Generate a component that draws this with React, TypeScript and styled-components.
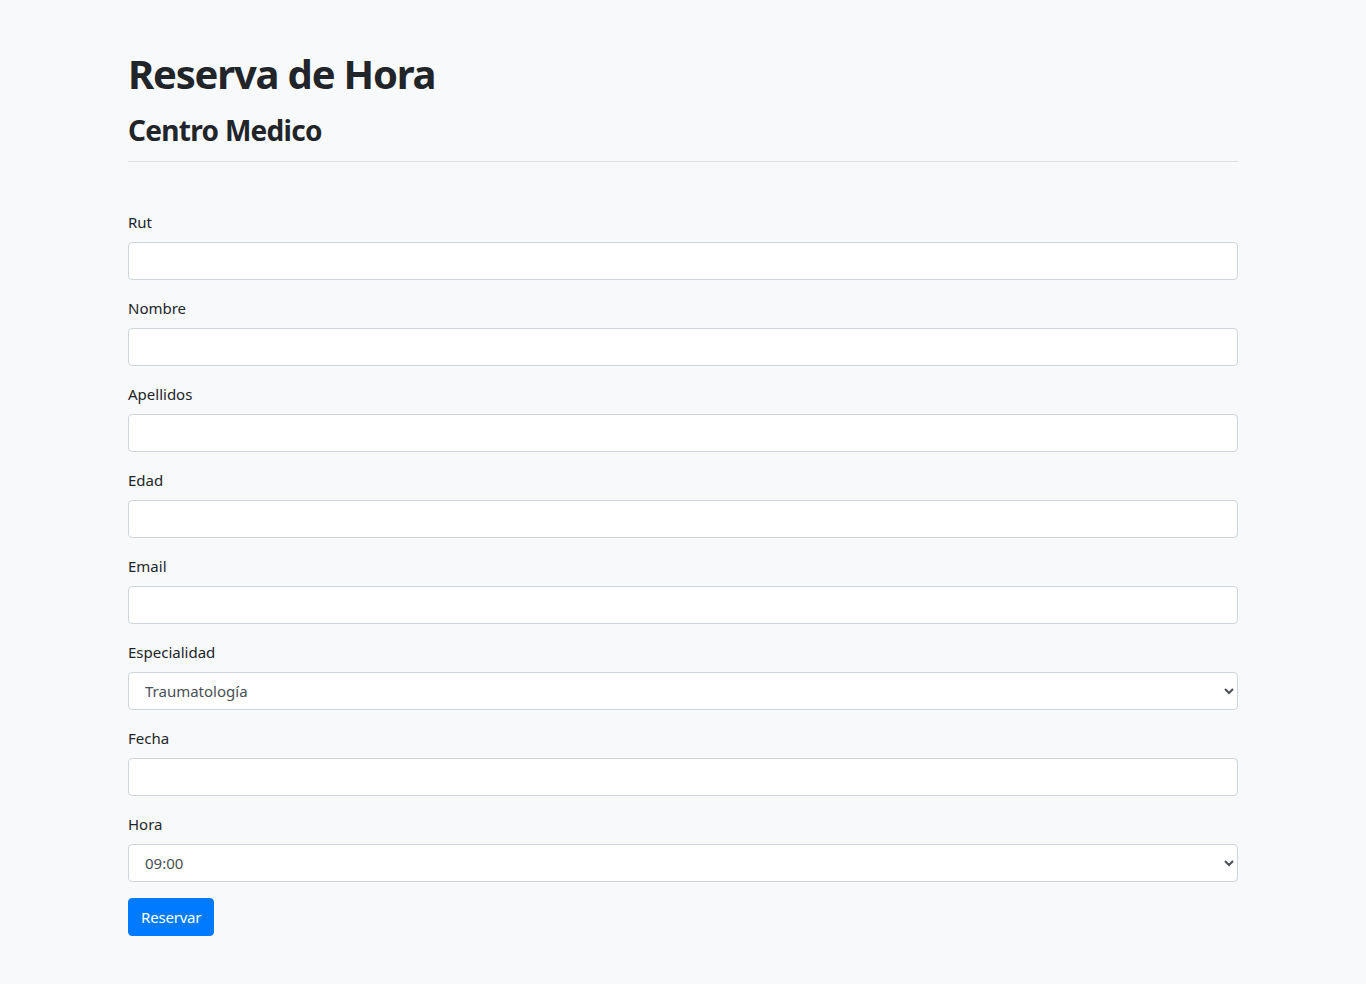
import React from "react";
import styled, { createGlobalStyle } from "styled-components";

const Global = createGlobalStyle`
  html, body { margin: 0; padding: 0; background: #f8f9fa; }
  body {
    font-family: "Noto Sans", "Open Sans", "Liberation Sans", sans-serif;
    font-size: 16px;
    line-height: 1.5;
    color: #212529;
  }
  * { box-sizing: border-box; }
`;

const Page = styled.div`
  min-height: 984px;
  background: #f8f9fa;
`;

const Container = styled.div`
  width: 1140px;
  margin: 0 auto;
  padding: 50px 15px 40px;
`;

const Title = styled.h1`
  margin: 0 0 15px;
  font-size: 40px;
  font-weight: 700;
  line-height: 48px;
  letter-spacing: -1.2px;
`;

const Subtitle = styled.h3`
  margin: 0;
  font-size: 28px;
  font-weight: 700;
  line-height: 34px;
  letter-spacing: -0.7px;
`;

const Rule = styled.hr`
  margin: 14px 0 48px;
  border: 0;
  border-top: 1px solid rgba(0, 0, 0, 0.1);
`;

const Form = styled.form`
  display: flex;
  flex-direction: column;
  align-items: flex-start;
`;

const Group = styled.div`
  width: 100%;
  margin-bottom: 16px;
`;

const Label = styled.label`
  display: block;
  margin-bottom: 8px;
  font-size: 15px;
  line-height: 24px;
`;

const Input = styled.input`
  display: block;
  width: 100%;
  height: 38px;
  padding: 6px 12px;
  font: inherit;
  font-size: 15px;
  color: #495057;
  background: #fff;
  border: 1px solid #ced4da;
  border-radius: 4px;
  outline: none;
`;

const Select = styled.select`
  display: block;
  width: 100%;
  height: 38px;
  padding: 6px 12px;
  font: inherit;
  font-size: 15px;
  color: #495057;
  background: #fff;
  border: 1px solid #ced4da;
  border-radius: 4px;
  outline: none;
`;

const Button = styled.button`
  height: 38px;
  padding: 6px 12px;
  font: inherit;
  font-size: 15px;
  line-height: 24px;
  letter-spacing: -0.2px;
  color: #fff;
  background: #007bff;
  border: 1px solid #007bff;
  border-radius: 4px;
  cursor: pointer;
`;

const fields = ["Rut", "Nombre", "Apellidos", "Edad", "Email"];

export default function App() {
  return (
    <Page>
      <Global />
      <Container>
        <Title>Reserva de Hora</Title>
        <Subtitle>Centro Medico</Subtitle>
        <Rule />
        <Form onSubmit={(e) => e.preventDefault()}>
          {fields.map((f) => (
            <Group key={f}>
              <Label>{f}</Label>
              <Input type="text" />
            </Group>
          ))}
          <Group>
            <Label>Especialidad</Label>
            <Select defaultValue="Traumatología">
              <option>Traumatología</option>
              <option>Cardiología</option>
              <option>Pediatría</option>
            </Select>
          </Group>
          <Group>
            <Label>Fecha</Label>
            <Input type="text" />
          </Group>
          <Group>
            <Label>Hora</Label>
            <Select defaultValue="09:00">
              <option>09:00</option>
              <option>10:00</option>
              <option>11:00</option>
            </Select>
          </Group>
          <Button type="submit">Reservar</Button>
        </Form>
      </Container>
    </Page>
  );
}
